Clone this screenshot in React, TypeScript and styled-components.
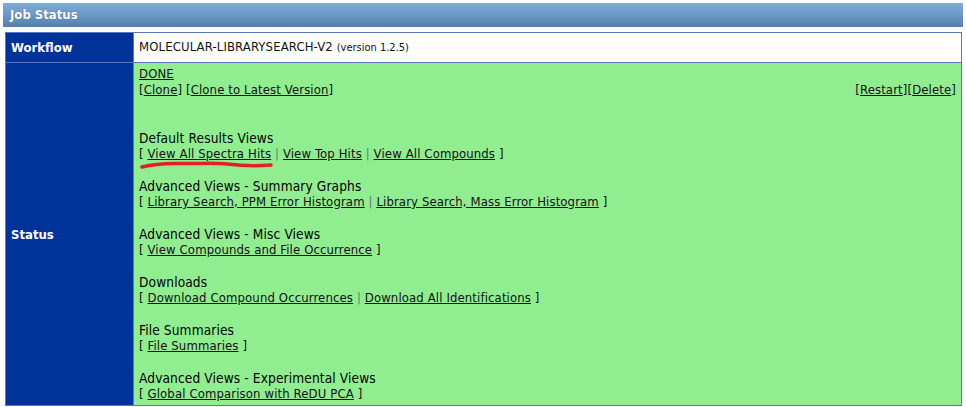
import React from "react";
import styled, { createGlobalStyle } from "styled-components";

const GlobalStyle = createGlobalStyle`
  html, body {
    margin: 0;
    padding: 0;
    background: #ffffff;
    font-family: "DejaVu Sans Condensed", "DejaVu Sans", sans-serif;
  }
`;

type LinkGroup = {
    title: string;
    links: string[];
};

const groups: LinkGroup[] = [
    { title: "Default Results Views", links: ["View All Spectra Hits", "View Top Hits", "View All Compounds"] },
    { title: "Advanced Views - Summary Graphs", links: ["Library Search, PPM Error Histogram", "Library Search, Mass Error Histogram"] },
    { title: "Advanced Views - Misc Views", links: ["View Compounds and File Occurrence"] },
    { title: "Downloads", links: ["Download Compound Occurrences", "Download All Identifications"] },
    { title: "File Summaries", links: ["File Summaries"] },
    { title: "Advanced Views - Experimental Views", links: ["Global Comparison with ReDU PCA"] },
];

export default () => {
    return <Page>
        <GlobalStyle/>
        <HeaderBar>Job Status</HeaderBar>
        <StatusTable>
            <tbody>
            <tr>
                <LabelCell>Workflow</LabelCell>
                <ValueCell>
                    MOLECULAR-LIBRARYSEARCH-V2 <Version>(version 1.2.5)</Version>
                </ValueCell>
            </tr>
            <tr>
                <LabelCell>Status</LabelCell>
                <ValueCell $green>
                    <Line><Link href="#">DONE</Link></Line>
                    <Line>
                        <RightActions>[<Link href="#">Restart</Link>][<Link href="#">Delete</Link>]</RightActions>
                        [<Link href="#">Clone</Link>] [<Link href="#">Clone to Latest Version</Link>]
                    </Line>
                    <Line>&nbsp;</Line>
                    <Line>&nbsp;</Line>
                    {groups.map((group, gi) => (
                        <Group key={group.title} $last={gi === groups.length - 1}>
                            <GroupTitle>{group.title}</GroupTitle>
                            <Line>
                                [{" "}
                                {group.links.map((link, li) => (
                                    <React.Fragment key={link}>
                                        {li > 0 && <Sep> | </Sep>}
                                        <Link href="#">{link}</Link>
                                    </React.Fragment>
                                ))}
                                {" "}]
                            </Line>
                            {gi === 0 && (
                                <Scribble width="140" height="12" viewBox="0 0 140 12">
                                    <path
                                        d="M3 9 C 14 6, 26 5, 42 5.5 C 60 6, 72 4.5, 88 6 C 104 8, 116 8.5, 132 7"
                                        fill="none"
                                        stroke="#e3202a"
                                        strokeWidth="3.5"
                                        strokeLinecap="round"
                                    />
                                </Scribble>
                            )}
                        </Group>
                    ))}
                </ValueCell>
            </tr>
            </tbody>
        </StatusTable>
    </Page>
}

const Page = styled.div`
    padding: 3px;
`;

const HeaderBar = styled.div`
    height: 24px;
    line-height: 24px;
    padding-left: 7px;
    background: linear-gradient(180deg, #80acd9 0%, #6b97c6 50%, #5280ad 100%);
    color: #ffffff;
    font-weight: 700;
    font-size: 13px;
    text-shadow: 0 0 1px rgba(0, 0, 0, 0.4);
`;

const StatusTable = styled.table`
    margin: 5px 2px 0 2px;
    width: 957px;
    border-collapse: collapse;
    border: 1px solid #5a76c4;
    font-size: 13px;
`;

const LabelCell = styled.td`
    width: 117px;
    padding: 6px 5px;
    background: #00339a;
    color: #ffffff;
    font-weight: 700;
    font-size: 13px;
    border: 1px solid #5a76c4;
    vertical-align: middle;
`;

const ValueCell = styled.td<{ $green?: boolean }>`
    padding: ${p => p.$green ? "3px 5px" : "6px 5px"};
    background: ${p => p.$green ? "#90ee90" : "#ffffff"};
    color: #111111;
    border: 1px solid #5a76c4;
    line-height: 16px;
    letter-spacing: 0.12px;
    vertical-align: top;
`;

const Version = styled.span`
    font-size: 11px;
    letter-spacing: 0;
`;

const Line = styled.div`
    line-height: 16px;
    height: 16px;
    white-space: nowrap;
`;

const GroupTitle = styled(Line)`
    font-size: 13.6px;
    color: #000000;
`;

const Group = styled.div<{ $last?: boolean }>`
    position: relative;
    margin-bottom: ${p => p.$last ? "0" : "16px"};
`;

const Link = styled.a`
    color: #111111;
    text-decoration: underline;
`;

const Sep = styled.span`
    color: #5e7a6a;
`;

const RightActions = styled.span`
    float: right;
`;

const Scribble = styled.svg`
    position: absolute;
    left: 0;
    top: 28px;
    pointer-events: none;
`;
